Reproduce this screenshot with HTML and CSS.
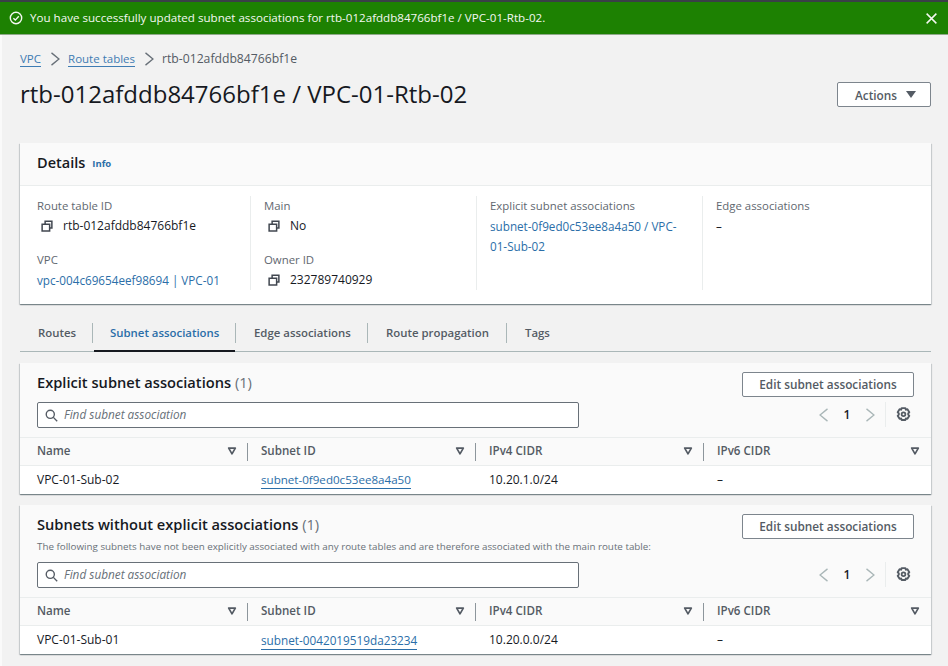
FILE: index.html
```html
<!DOCTYPE html>
<html lang="en">
<head>
  <meta charset="UTF-8">
  <title>Route table rtb-012afddb84766bf1e</title>
  <link rel="stylesheet" href="styles.css">
</head>
<body>
  <svg class="defs" width="0" height="0">
    <symbol id="copy" viewBox="0 0 16 16"><path d="M5.500 4.500V1.500h9v9h-3M1.500 5.500h10v9h-10z" fill="none" stroke="currentColor" stroke-width="2"/></symbol>
    <symbol id="search" viewBox="0 0 16 16"><circle cx="6.500" cy="6.500" r="5" fill="none" stroke="currentColor" stroke-width="1.700"/><path d="M10.300 10.300l4.700 4.700" fill="none" stroke="currentColor" stroke-width="1.700"/></symbol>
    <symbol id="filter" viewBox="0 0 12 12"><path d="M2 2.500h8L6 9.500z" fill="none" stroke="currentColor" stroke-width="2" stroke-linejoin="round"/></symbol>
    <symbol id="left" viewBox="0 0 16 16"><path d="M12 1L3.500 8l8.500 7" fill="none" stroke="currentColor" stroke-width="1.500"/></symbol>
    <symbol id="right" viewBox="0 0 16 16"><path d="M4 1l8.500 7L4 15" fill="none" stroke="currentColor" stroke-width="1.500"/></symbol>
    <symbol id="gear" viewBox="0 0 16 16"><path d="M6 1.200h4l.5 1.700 1.700-.5 2 3.200-1.200 1.300v1.200l1.200 1.300-2 3.200-1.700-.5-.5 1.700H6l-.5-1.700-1.700.5-2-3.200L3 8.100V6.900L1.800 5.600l2-3.200 1.700.5z" fill="none" stroke="currentColor" stroke-width="2" stroke-linejoin="round"/><circle cx="8" cy="7.700" r="2" fill="none" stroke="currentColor" stroke-width="1.900"/></symbol>
  </svg>

  <div class="flash">
    <svg class="flash-icon" viewBox="0 0 16 16"><circle cx="8" cy="8" r="6.500" fill="none" stroke="currentColor" stroke-width="1.600"/><path d="M5 8.200l2.200 2.200L11.200 6" fill="none" stroke="currentColor" stroke-width="1.600"/></svg>
    <span class="flash-text">You have successfully updated subnet associations for rtb-012afddb84766bf1e / VPC-01-Rtb-02.</span>
    <svg class="flash-close" viewBox="0 0 16 16"><path d="M2 2l12 12M14 2L2 14" fill="none" stroke="currentColor" stroke-width="1.800"/></svg>
  </div>

  <main class="page">
    <nav class="crumbs">
      <a href="#">VPC</a>
      <svg class="crumb-sep"><use href="#right"/></svg>
      <a href="#">Route tables</a>
      <svg class="crumb-sep"><use href="#right"/></svg>
      <span>rtb-012afddb84766bf1e</span>
    </nav>

    <div class="page-head">
      <h1>rtb-012afddb84766bf1e / VPC-01-Rtb-02</h1>
      <button class="btn btn-actions">Actions <span class="caret"></span></button>
    </div>

    <section class="card details">
      <header class="details-head">
        <h2>Details</h2>
        <a class="info" href="#">Info</a>
      </header>
      <div class="details-grid">
        <div class="col">
          <div class="field">
            <div class="label">Route table ID</div>
            <div class="value"><svg class="copy"><use href="#copy"/></svg>rtb-012afddb84766bf1e</div>
          </div>
          <div class="field">
            <div class="label">VPC</div>
            <div class="plain"><a href="#">vpc-004c69654eef98694 | VPC-01</a></div>
          </div>
        </div>
        <div class="col">
          <div class="field">
            <div class="label">Main</div>
            <div class="value"><svg class="copy"><use href="#copy"/></svg>No</div>
          </div>
          <div class="field">
            <div class="label">Owner ID</div>
            <div class="value"><svg class="copy"><use href="#copy"/></svg>232789740929</div>
          </div>
        </div>
        <div class="col">
          <div class="field">
            <div class="label">Explicit subnet associations</div>
            <div class="plain"><a href="#">subnet-0f9ed0c53ee8a4a50 / VPC-<br>01-Sub-02</a></div>
          </div>
        </div>
        <div class="col">
          <div class="field">
            <div class="label">Edge associations</div>
            <div class="plain">–</div>
          </div>
        </div>
      </div>
    </section>

    <div class="tabs">
      <a class="tab tab-first" href="#">Routes</a>
      <a class="tab tab-active" href="#">Subnet associations</a>
      <a class="tab tab-edge" href="#">Edge associations</a>
      <a class="tab tab-prop" href="#">Route propagation</a>
      <a class="tab tab-last" href="#">Tags</a>
    </div>

    <section class="card assoc">
      <div class="assoc-top">
        <h2>Explicit subnet associations <span class="count">(1)</span></h2>
        <button class="btn btn-edit">Edit subnet associations</button>
      </div>
      <div class="tools">
        <div class="search"><svg class="search-icon"><use href="#search"/></svg><span>Find subnet association</span></div>
        <div class="pager">
          <svg class="pager-arrow"><use href="#left"/></svg>
          <b>1</b>
          <svg class="pager-arrow"><use href="#right"/></svg>
          <span class="pager-sep"></span>
          <svg class="gear"><use href="#gear"/></svg>
        </div>
      </div>
      <div class="row row-head">
        <div class="cell">Name<svg class="filter"><use href="#filter"/></svg></div>
        <div class="cell">Subnet ID<svg class="filter"><use href="#filter"/></svg></div>
        <div class="cell">IPv4 CIDR<svg class="filter"><use href="#filter"/></svg></div>
        <div class="cell">IPv6 CIDR<svg class="filter"><use href="#filter"/></svg></div>
      </div>
      <div class="row row-body">
        <div class="cell">VPC-01-Sub-02</div>
        <div class="cell"><a class="under" href="#">subnet-0f9ed0c53ee8a4a50</a></div>
        <div class="cell">10.20.1.0/24</div>
        <div class="cell">–</div>
      </div>
    </section>

    <section class="card assoc assoc-second">
      <div class="assoc-top">
        <div>
          <h2>Subnets without explicit associations <span class="count">(1)</span></h2>
          <p class="desc">The following subnets have not been explicitly associated with any route tables and are therefore associated with the main route table:</p>
        </div>
        <button class="btn btn-edit">Edit subnet associations</button>
      </div>
      <div class="tools">
        <div class="search"><svg class="search-icon"><use href="#search"/></svg><span>Find subnet association</span></div>
        <div class="pager">
          <svg class="pager-arrow"><use href="#left"/></svg>
          <b>1</b>
          <svg class="pager-arrow"><use href="#right"/></svg>
          <span class="pager-sep"></span>
          <svg class="gear"><use href="#gear"/></svg>
        </div>
      </div>
      <div class="row row-head">
        <div class="cell">Name<svg class="filter"><use href="#filter"/></svg></div>
        <div class="cell">Subnet ID<svg class="filter"><use href="#filter"/></svg></div>
        <div class="cell">IPv4 CIDR<svg class="filter"><use href="#filter"/></svg></div>
        <div class="cell">IPv6 CIDR<svg class="filter"><use href="#filter"/></svg></div>
      </div>
      <div class="row row-body">
        <div class="cell">VPC-01-Sub-01</div>
        <div class="cell"><a class="under wide" href="#">subnet-0042019519da23234</a></div>
        <div class="cell">10.20.0.0/24</div>
        <div class="cell">–</div>
      </div>
    </section>
  </main>
</body>
</html>
```

FILE: styles.css
```css
/* Base */
html, body {
  margin: 0;
  padding: 0;
}
body {
  width: 948px;
  height: 666px;
  overflow: hidden;
  background: #f2f2f2;
  color: #16191f;
  font-family: "Open Sans", "Noto Sans", sans-serif;
  font-size: 12px;
  line-height: 20px;
}
a {
  color: #2b6ea8;
  text-decoration: none;
}
h1, h2, p {
  margin: 0;
}
.defs {
  position: absolute;
}

/* Success banner */
.flash {
  height: 32px;
  border-top: 2px solid #3a3f47;
  border-bottom: 1px solid #8fa98a;
  background: #1d8102;
  color: #f4f8f2;
  display: flex;
  align-items: center;
  padding: 0 10px 0 9px;
}
.flash-icon {
  width: 14px;
  height: 14px;
  margin-right: 7px;
}
.flash-text {
  flex: 1;
  font-size: 11.600px;
}
.flash-close {
  width: 13px;
  height: 13px;
}

/* Page */
.page {
  min-height: 631px;
  padding: 0 17px 0 18px;
  border-left: 2px solid #fafafa;
}
.crumbs {
  height: 20px;
  padding-top: 14px;
  display: flex;
  align-items: center;
  color: #545b64;
}
.crumbs a {
  color: #3f7cb3;
  border-bottom: 1px solid #3f7cb3;
  font-size: 11.500px;
  line-height: 15px;
}
.crumbs span {
  font-size: 12.200px;
}
.crumb-sep {
  width: 14px;
  height: 14px;
  margin: 0 6.500px;
  color: #687078;
}
.page-head {
  height: 40px;
  margin-top: 5px;
  display: flex;
  align-items: center;
  justify-content: space-between;
}
h1 {
  font-size: 24px;
  font-weight: 400;
  line-height: 30px;
}
.btn {
  background: #fff;
  border: 1px solid #7d858d;
  border-radius: 2px;
  color: #545b64;
  font-family: inherit;
  font-size: 11.800px;
  font-weight: 600;
  padding: 0;
}
.btn-actions {
  width: 94px;
  height: 25px;
  padding-left: 3px;
  padding-top: 1px;
  display: flex;
  align-items: center;
  justify-content: center;
}
.caret {
  width: 0;
  height: 0;
  margin-left: 9px;
  border-left: 5px solid transparent;
  border-right: 5px solid transparent;
  border-top: 7px solid #545b64;
}

/* Cards */
.card {
  background: #fff;
  box-shadow: 0 1px 1px 0 rgba(0, 28, 36, .35), 1px 1px 1px 0 rgba(0, 28, 36, .12), -1px 1px 1px 0 rgba(0, 28, 36, .12);
}
.details {
  margin-top: 29px;
  height: 161px;
}
.details-head {
  height: 40px;
  padding: 0 0 2px 17px;
  background: #fafafa;
  border-bottom: 1px solid #eaeded;
  display: flex;
  align-items: center;
  gap: 7px;
}
.details-head h2 {
  font-size: 14.500px;
  font-weight: 600;
}
.info {
  font-size: 9.500px;
  font-weight: 700;
  margin-top: 2px;
}
.details-grid {
  display: grid;
  grid-template-columns: repeat(4, 226px);
  margin-top: 10px;
}
.col {
  height: 94px;
  padding: 0 0 0 17px;
  border-right: 1px solid #eaeded;
  box-sizing: border-box;
}
.col:first-child {
  width: 231px;
}
.col:nth-child(2),
.col:nth-child(3) {
  margin-left: 5px;
  width: 226px;
  padding-left: 13px;
}
.col:last-child {
  margin-left: 5px;
  padding-left: 13px;
  border-right: 0;
}
.field {
  height: 54px;
}
.label {
  color: #5f6870;
  font-size: 11.400px;
}
.value {
  display: flex;
  align-items: center;
  padding-left: 4px;
}
.plain {
  font-size: 11.700px;
}
.copy {
  width: 12px;
  height: 12px;
  margin-right: 10px;
  color: #414750;
}

/* Tabs */
.tabs {
  height: 30px;
  margin-top: 17px;
  border-bottom: 1px solid #aab7b8;
  display: flex;
  align-items: flex-start;
  color: #545b64;
}
.tab {
  height: 20px;
  color: #545b64;
  font-size: 11.400px;
  font-weight: 600;
  margin-top: 2px;
  white-space: nowrap;
  border-right: 1px solid #aab7b8;
  box-sizing: border-box;
  position: relative;
}
.tab-first {
  width: 73px;
  padding-left: 18px;
}
.tab-active {
  width: 143px;
  padding-left: 17px;
  color: #2b6ea8;
}
.tab-active::after {
  content: "";
  position: absolute;
  left: 1px;
  right: 0;
  bottom: -9px;
  height: 2px;
  background: #16191f;
}
.tab-edge {
  width: 132px;
  padding-left: 18px;
}
.tab-prop {
  width: 139px;
  padding-left: 18px;
}
.tab-last {
  padding-left: 18px;
  border-right: 0;
}

/* Association tables */
.assoc {
  margin-top: 11px;
  height: 131px;
  background: #fafafa;
  display: flex;
  flex-direction: column;
}
.assoc-second {
  height: 149px;
}
.assoc-top {
  display: flex;
  justify-content: space-between;
  padding: 8px 17px 0;
  height: 31px;
}
.assoc-second .assoc-top {
  height: 49px;
}
.assoc-top h2 {
  font-size: 14.650px;
  line-height: 22px;
  font-weight: 600;
}
.count {
  color: #687078;
  font-weight: 400;
}
.desc {
  color: #687078;
  font-size: 9.800px;
  line-height: 14px;
  margin-top: 5px;
  white-space: nowrap;
}
.btn-edit {
  width: 172px;
  height: 25px;
  padding-bottom: 2px;
  flex: none;
  position: relative;
  top: 1px;
}
.tools {
  height: 35px;
  padding: 0 17px;
  display: flex;
  justify-content: space-between;
  align-items: flex-start;
}
.search {
  width: 540px;
  height: 24px;
  background: #fff;
  border: 1px solid #687078;
  border-radius: 2px;
  display: flex;
  align-items: center;
  color: #687078;
  font-size: 11.800px;
  font-style: italic;
}
.search span {
  padding-bottom: 2px;
}
.search-icon {
  width: 13px;
  height: 13px;
  margin: 0 6px 0 7px;
  color: #545b64;
}
.pager {
  width: 97px;
  height: 25px;
  display: flex;
  align-items: center;
  color: #aab7b8;
}
.pager b {
  width: 32px;
  text-align: center;
  color: #16191f;
  font-weight: 600;
}
.pager-arrow {
  width: 14px;
  height: 14px;
}
.pager-sep {
  width: 1px;
  height: 25px;
  margin: 0 10px 0 8px;
  background: #eaeded;
}
.gear {
  width: 15px;
  height: 15px;
  color: #545b64;
}
.row {
  display: grid;
  grid-template-columns: 228px 228px 228px 1fr;
}
.row-head {
  height: 27px;
  border-top: 1px solid #eaeded;
  border-bottom: 1px solid #eaeded;
  color: #545b64;
  font-size: 11.600px;
  font-weight: 600;
}
.row-head .cell {
  display: flex;
  align-items: center;
  justify-content: space-between;
  padding-right: 11px;
  padding-bottom: 2px;
  position: relative;
}
.row-head .cell:not(:last-child)::after {
  content: "";
  position: absolute;
  right: 0;
  top: 5px;
  height: 18px;
  width: 1px;
  background: #8d969c;
}
.row-body {
  flex: 1;
  background: #fff;
  align-items: center;
}
.cell {
  padding-left: 13px;
  min-width: 0;
}
.cell:first-child {
  padding-left: 17px;
}
.filter {
  width: 10px;
  height: 10px;
  color: #545b64;
}
.under {
  border-bottom: 1px solid #2b6ea8;
  padding-bottom: 1px;
  font-size: 11.600px;
}
.under.wide {
  font-size: 11.750px;
}
```
